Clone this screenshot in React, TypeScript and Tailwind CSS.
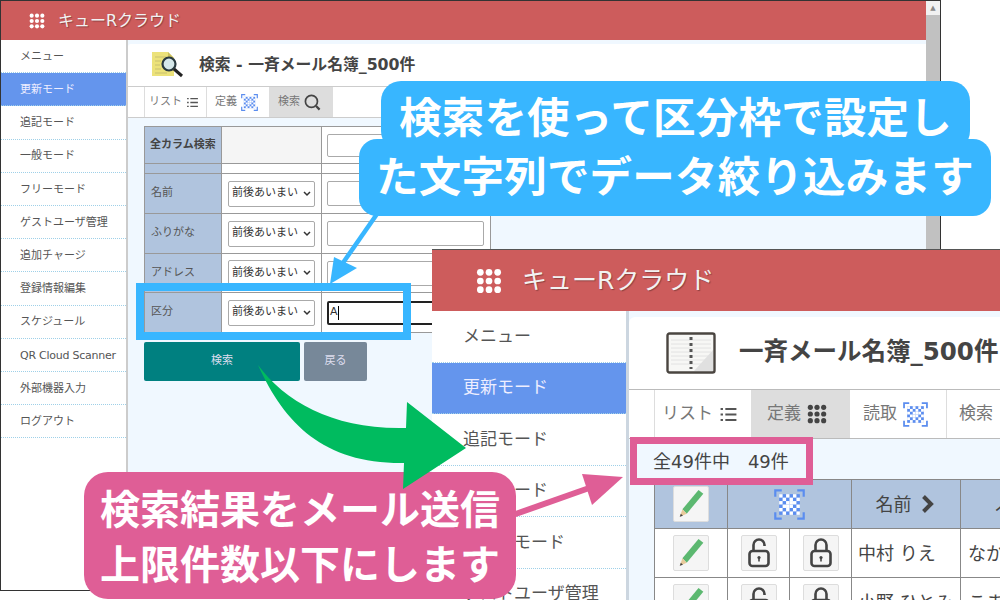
const JP = "font-['DejaVu_Sans','Noto_Sans_CJK_JP',sans-serif]";

function Dots({ size, color = "#fff" }: { size: number; color?: string }) {
  const c = [4, 12, 20];
  return (
    <svg width={size} height={size} viewBox="0 0 24 24">
      {c.map((x) => c.map((y) => <circle key={`${x}-${y}`} cx={x} cy={y} r={3.1} fill={color} />))}
    </svg>
  );
}

function Qr({ size }: { size: number }) {
  const idx = [0, 1, 2, 3, 4, 5];
  return (
    <svg width={size} height={size} viewBox="0 0 24 24">
      <path d="M1 6V1h5M18 1h5v5M23 18v5h-5M6 23H1v-5" fill="none" stroke="#5b8def" strokeWidth="1.7" />
      <rect x="4" y="4" width="16" height="16" fill="#5b8def" />
      {idx.map((i) =>
        idx.map((j) =>
          (i + j) % 2 === 0 || (i * j) % 5 === 1 ? (
            <rect key={`${i}-${j}`} x={4 + i * 2.67} y={4 + j * 2.67} width="2.67" height="2.67" fill="#fff" />
          ) : null,
        ),
      )}
    </svg>
  );
}

function ListIcon({ size }: { size: number }) {
  return (
    <svg width={size} height={size} viewBox="0 0 24 24" stroke="#555" strokeWidth="2.4">
      <path d="M2 5h3M8 5h14M2 12h3M8 12h14M2 19h3M8 19h14" />
    </svg>
  );
}

function Magnifier({ size }: { size: number }) {
  return (
    <svg width={size} height={size} viewBox="0 0 24 24" fill="none" stroke="#444">
      <circle cx="10.5" cy="10.5" r="8.5" strokeWidth="2.4" />
      <path d="M17 17l5 5" strokeWidth="3.2" />
    </svg>
  );
}

function Pencil() {
  return (
    <svg width="28" height="30" viewBox="0 0 26 28">
      <path d="M5 19L20 1l4.5 3.5L9 23z" fill="#5cb870" />
      <path d="M5 19l4 4-6.5 3z" fill="#e8c99a" />
      <path d="M2.5 26l1-3 2 2z" fill="#444" />
    </svg>
  );
}

function Lock({ open }: { open?: boolean }) {
  return (
    <svg width="22" height="30" viewBox="0 0 22 30" fill="none" stroke="#444" strokeWidth="2.6">
      <rect x="1.5" y="13" width="19" height="15" rx="3" />
      <path d={open ? "M5.5 13V7a5.5 5.5 0 0 1 11 0v1" : "M5.5 13V7a5.5 5.5 0 0 1 11 0v6"} />
      <path d="M11 20v3.5" strokeWidth="1.6" />
      <circle cx="11" cy="19.5" r="1.6" fill="#444" stroke="none" />
    </svg>
  );
}

const menu = ["メニュー", "更新モード", "追記モード", "一般モード", "フリーモード", "ゲストユーザ管理", "追加チャージ", "登録情報編集", "スケジュール", "QR Cloud Scanner", "外部機器入力", "ログアウト"];

function Select() {
  return (
    <div className="flex h-[26px] w-[87px] items-center justify-between rounded-[2px] border border-[#aaa] bg-white pl-[3px] pr-[3px] text-[11px] text-[#333]">
      <span>前後あいまい</span>
      <svg width="8" height="6" viewBox="0 0 8 6" fill="none" stroke="#333" strokeWidth="1.5"><path d="M1 1l3 3 3-3" /></svg>
    </div>
  );
}

function SearchRow({ label, h, focus }: { label: string; h: string; focus?: boolean }) {
  return (
    <div className={`flex border-b border-[#999] ${h}`}>
      <div className="flex w-[77px] items-center border-r border-[#999] bg-[#b0c4de] pl-[6px] text-[11px] text-[#555]">{label}</div>
      <div className="flex w-[100px] items-center border-r border-[#999] pl-[6px]"><Select /></div>
      <div className="flex w-[168px] items-center pl-[5px]">
        {focus ? (
          <div className="flex h-[24px] w-[157px] items-center rounded-[2px] border-2 border-[#222] pl-[1px] text-[11px] text-[#333]">A<span className="h-[14px] w-px bg-black" /></div>
        ) : (
          <div className="h-[25px] w-[157px] rounded-[2px] border border-[#aaa] bg-white" />
        )}
      </div>
    </div>
  );
}

function MainWindow() {
  return (
    <div className="absolute left-0 top-0 flex h-[591px] w-[941px] border border-[#333] bg-white">
      <div className="flex min-w-0 flex-1 flex-col">
        <div className="flex h-[39px] items-center bg-[#cd5c5c] pl-[28px] text-white">
          <Dots size={16} />
          <span className="ml-[13px] text-[16px] text-[#f2f2f2] [text-shadow:1px_1px_1px_rgba(0,0,0,0.3)]">キューRクラウド</span>
        </div>
        <div className="flex min-h-0 flex-1">
          <div className="w-[125px] bg-white">
            {menu.map((m, i) => (
              <div key={m} className={`flex h-[33.2px] items-center whitespace-nowrap border-b border-dotted border-[#9fd0e8] pl-[19px] pt-[2px] text-[11px] ${i === 1 ? "bg-[#6495ed] text-[#eef]" : "text-[#555]"} ${m.startsWith("QR") ? "tracking-[-0.25px]" : ""}`}>{m}</div>
            ))}
          </div>
          <div className="w-[2px] bg-[#ccc]" />
          <div className="min-w-0 flex-1 bg-[#f0f8ff] pt-[4px]">
            <div className="flex h-[42px] items-center rounded-tl-[3px] bg-white pl-[23px]">
              <svg width="33" height="28" viewBox="0 0 33 28">
                <path d="M1 1h16l6 6v18H1z" fill="#ece27a" />
                <path d="M17 1l6 6h-6z" fill="#c9be5c" />
                <path d="M4 6h11M4 10h6M4 14h5M4 18h6M4 22h12" stroke="#c8c070" strokeWidth="1" />
                <circle cx="18" cy="13" r="6.5" fill="#d6e8ea" stroke="#2a3a40" strokeWidth="2.2" />
                <path d="M23 18l8 7" stroke="#222" strokeWidth="3" />
              </svg>
              <span className="ml-[15px] whitespace-nowrap text-[15.8px] font-bold text-[#444]">検索 - 一斉メール名簿_500件</span>
            </div>
            <div className="flex h-[32px] border-y border-[#ccc] bg-white pl-[16px] text-[11px] text-[#777]">
              <div className="flex w-[63px] items-center gap-[4px] border-x border-[#ddd] pl-[4px]">リスト<ListIcon size={13} /></div>
              <div className="flex w-[63px] items-center gap-[4px] border-r border-[#ddd] pl-[8px]">定義<Qr size={17} /></div>
              <div className="flex w-[63px] items-center gap-[4px] bg-[#ddd] pl-[8px]">検索<Magnifier size={17} /></div>
            </div>
            <div className="pl-[16px] pt-[8px]">
              <div className="w-[347px] border-x border-t border-[#999] bg-white">
                <div className="flex h-[37px] border-b border-[#999]">
                  <div className="flex w-[77px] items-center border-r border-[#999] bg-[#b0c4de] pl-[5px] text-[11px] font-bold text-[#444]">全カラム検索</div>
                  <div className="w-[100px] border-r border-[#999] bg-[#f5f5f5]" />
                  <div className="flex flex-1 items-center pl-[5px]"><div className="h-[23px] w-[157px] rounded-[2px] border border-[#aaa]" /></div>
                </div>
                <div className="flex h-[10px] border-b border-[#999]">
                  <div className="w-[77px] border-r border-[#999] bg-[#b0c4de]" />
                  <div className="w-[100px] border-r border-[#999]" />
                </div>
                <SearchRow label="名前" h="h-[40px]" />
                <SearchRow label="ふりがな" h="h-[40px]" />
                <SearchRow label="アドレス" h="h-[39px]" />
                <SearchRow label="区分" h="h-[40px]" focus />
              </div>
              <div className="mt-[9px] flex gap-[4px] text-[11px] text-[#dde]">
                <div className="flex h-[39px] w-[156px] items-center justify-center rounded-[2px] bg-[#008080]">検索</div>
                <div className="flex h-[39px] w-[63px] items-center justify-center rounded-[2px] bg-[#778899]">戻る</div>
              </div>
            </div>
          </div>
        </div>
      </div>
      <div className="flex w-[14px] flex-col bg-[#f1f1f1]">
        <div className="flex h-[14px] items-center justify-center text-[7px] text-[#888]">▲</div>
        <div className="h-[260px] bg-[#c1c1c1]" />
      </div>
    </div>
  );
}

function PencilBtn() {
  return <div className="flex h-[36px] w-[36px] items-center justify-center rounded-[2px] border border-[#ddd] bg-[#f5f5f5]"><Pencil /></div>;
}
function LockBtn({ open }: { open?: boolean }) {
  return <div className="flex h-[36px] w-[36px] items-center justify-center rounded-[2px] border border-[#ddd] bg-[#f5f5f5]"><Lock open={open} /></div>;
}

function ResultRow({ name, kana }: { name: string; kana: string }) {
  return (
    <div className="flex h-[49px] shrink-0 border-b border-[#888] bg-white text-[18px] text-[#444]">
      <div className="flex w-[73px] shrink-0 items-center justify-center border-r border-[#888]"><PencilBtn /></div>
      <div className="flex w-[62px] shrink-0 items-center justify-center border-r border-[#888]"><LockBtn open /></div>
      <div className="flex w-[62px] shrink-0 items-center justify-center border-r border-[#888]"><LockBtn /></div>
      <div className="flex w-[109px] shrink-0 items-center overflow-hidden whitespace-nowrap border-r border-[#888] pl-[6px]">{name}</div>
      <div className="flex w-[60px] shrink-0 items-center overflow-hidden whitespace-nowrap pl-[7px]">{kana}</div>
    </div>
  );
}

function SecondWindow() {
  return (
    <div className="absolute left-[432px] top-[249px] h-[351px] w-[568px] overflow-hidden border-t border-[#555] bg-white">
      <div className="flex h-[61px] items-center bg-[#cd5c5c] pl-[44px]">
        <Dots size={26} />
        <span className="ml-[20px] text-[25px] text-[#f2f2f2] [text-shadow:1px_1px_1px_rgba(0,0,0,0.3)]">キューRクラウド</span>
      </div>
      <div className="flex h-[289px]">
        <div className="w-[194px] shrink-0 bg-white">
          {menu.slice(0, 6).map((m, i) => (
            <div key={m} className={`flex h-[51.5px] items-center border-b border-dotted border-[#9fd0e8] pl-[31px] text-[17px] ${i === 1 ? "bg-[#6495ed] text-[#eef]" : "text-[#555]"}`}>{m}</div>
          ))}
        </div>
        <div className="w-[3px] shrink-0 bg-[#ccd6e0]" />
        <div className="min-w-0 flex-1 bg-[#f0f8ff] pt-[6px]">
          <div className="flex h-[72px] items-center rounded-tl-[6px] bg-white pl-[37px]">
            <svg width="50" height="42" viewBox="0 0 50 42">
              <rect x="1.5" y="1.5" width="47" height="39" rx="2" fill="#f7f7f5" stroke="#4a4540" strokeWidth="2.4" />
              <path d="M5 8h40M5 12h40M5 16h40M5 20h40M5 24h40M5 28h40M5 32h40" stroke="#e2e2e2" strokeWidth="1" />
              <path d="M25 5v32" stroke="#555" strokeWidth="3" strokeDasharray="3 3" />
              <path d="M47 18v21H28z" fill="#e0e0e0" />
            </svg>
            <span className="ml-[23px] -translate-y-[1px] whitespace-nowrap text-[24.5px] font-bold text-[#444]">一斉メール名簿_500件</span>
          </div>
          <div className="flex h-[50px] border-y border-[#bbb] bg-white pl-[25px] text-[17px] text-[#777]">
            <div className="flex w-[97px] items-center gap-[6px] border-l border-[#ddd] pl-[7px]">リスト<ListIcon size={19} /></div>
            <div className="flex w-[99px] items-center gap-[6px] bg-[#ddd] pl-[16px]">定義<Dots size={20} color="#444" /></div>
            <div className="flex w-[97px] items-center gap-[6px] border-r border-[#ddd] pl-[13px]">読取<Qr size={25} /></div>
            <div className="flex items-center whitespace-nowrap pl-[12px]">検索</div>
          </div>
          <div className="flex h-[40px] items-end pb-[4px] pl-[24px] text-[18px] text-[#444]">全49件中　49件</div>
          <div className="ml-[25px] flex w-[400px] flex-col border-l border-t border-[#888]">
            <div className="flex h-[49px] shrink-0 border-b border-[#888] bg-[#b0c4de] text-[18px] text-[#444]">
              <div className="flex w-[73px] shrink-0 items-center justify-center border-r border-[#888]"><PencilBtn /></div>
              <div className="flex w-[124px] shrink-0 items-center justify-center border-r border-[#888]"><Qr size={31} /></div>
              <div className="flex w-[109px] shrink-0 items-center justify-center gap-[9px] border-r border-[#888] pr-[2px]">名前<svg width="14" height="20" viewBox="0 0 14 20" fill="none" stroke="#444" strokeWidth="4"><path d="M2.5 2.5l7.5 7.5-7.5 7.5" /></svg></div>
              <div className="flex w-[60px] shrink-0 items-center overflow-hidden whitespace-nowrap pl-[34px]">ふりがな</div>
            </div>
            <ResultRow name="中村 りえ" kana="なかむら りえ" />
            <ResultRow name="小野 ひとみ" kana="こま" />
          </div>
        </div>
      </div>
    </div>
  );
}

function Overlays() {
  return (
    <>
      <svg className="absolute left-0 top-0" width="1000" height="600" viewBox="0 0 1000 600">
        <path d="M377 214L338 270" stroke="#38b6ff" strokeWidth="4.5" />
        <path d="M334 257L330 284L357 268z" fill="#38b6ff" />
        <path d="M510 516L592 487" stroke="#df5e96" strokeWidth="6" />
        <path d="M582 474L623 477L592 505z" fill="#df5e96" />
      </svg>
      <div className="absolute left-[136px] top-[283px] h-[57px] w-[275px] border-[8px] border-[#38b6ff]" />
      <div className="absolute left-[630px] top-[437px] h-[48px] w-[183px] border-[7px] border-[#df5e96]" />

      <div className="absolute left-[381px] top-[81px] h-[70px] w-[589px] rounded-[20px] bg-[#38b6ff]" />
      <div className="absolute left-[359px] top-[139px] h-[77px] w-[632px] rounded-[18px] bg-[#38b6ff]" />
      <div className="absolute left-[381px] top-[85px] flex h-[69px] w-[589px] items-center justify-center whitespace-nowrap text-[42.5px] font-bold leading-none tracking-[0.2px] text-white">検索を使って区分枠で設定し</div>
      <div className="absolute left-[359px] top-[148px] flex h-[60px] w-[632px] items-center justify-center whitespace-nowrap text-[42.5px] font-bold leading-none tracking-[0.2px] text-white">た文字列でデータ絞り込みます</div>

      <div className="absolute left-[84px] top-[472px] flex h-[127px] w-[432px] flex-col items-center justify-center gap-[15px] rounded-[24px] bg-[#df5e96] pt-[3px] text-[40px] font-bold leading-none text-white">
        <div className="whitespace-nowrap">検索結果をメール送信</div>
        <div className="whitespace-nowrap">上限件数以下にします</div>
      </div>

      <svg className="absolute left-0 top-0" width="1000" height="600" viewBox="0 0 1000 600">
        <path d="M258 365C285 402 335 430 406 428L407 402L466 448L403 489L404 463C325 464 285 425 258 365z" fill="#00bb5f" />
      </svg>
    </>
  );
}

export default function App() {
  return (
    <div className={`relative h-[600px] w-[1000px] overflow-hidden bg-white ${JP}`}>
      <MainWindow />
      <SecondWindow />
      <Overlays />
    </div>
  );
}
